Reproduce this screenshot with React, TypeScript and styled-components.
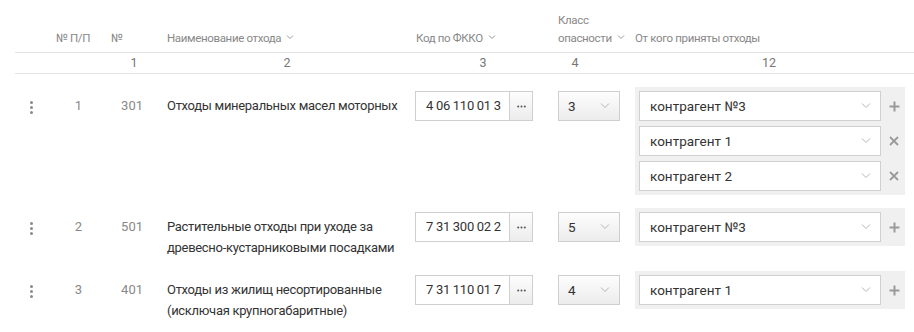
import React from "react";
import styled, { createGlobalStyle } from "styled-components";

const GlobalStyle = createGlobalStyle`
  body {
    margin: 0;
    background: #fff;
    font-family: Roboto, "Liberation Sans", sans-serif;
  }
  * {
    box-sizing: border-box;
  }
`;

const COLS = "30px 55px 56px 248px 143px 77px 1fr";

interface Contractor {
  name: string;
}

interface WasteRow {
  pos: number;
  num: number;
  name: string[];
  code: string;
  hazard: number;
  contractors: Contractor[];
}

const rows: WasteRow[] = [
  {
    pos: 1,
    num: 301,
    name: ["Отходы минеральных масел моторных"],
    code: "4 06 110 01 3",
    hazard: 3,
    contractors: [
      { name: "контрагент №3" },
      { name: "контрагент 1" },
      { name: "контрагент 2" },
    ],
  },
  {
    pos: 2,
    num: 501,
    name: ["Растительные отходы при уходе за", "древесно-кустарниковыми посадками"],
    code: "7 31 300 02 2",
    hazard: 5,
    contractors: [{ name: "контрагент №3" }],
  },
  {
    pos: 3,
    num: 401,
    name: ["Отходы из жилищ несортированные", "(исключая крупногабаритные)"],
    code: "7 31 110 01 7",
    hazard: 4,
    contractors: [{ name: "контрагент 1" }],
  },
];

function Chevron({ size = 8 }: { size?: number }) {
  const h = size / 2 + 1;
  return (
    <svg width={size + 2} height={h + 1} viewBox={`-1 -0.5 ${size + 2} ${h + 1}`}>
      <polyline
        points={`0,0 ${size / 2},${size / 2} ${size},0`}
        fill="none"
        stroke="currentColor"
        strokeWidth="1"
      />
    </svg>
  );
}

function PlusIcon() {
  return (
    <svg width="11" height="11" viewBox="0 0 11 11">
      <path d="M5.5 0.5v10M0.5 5.5h10" stroke="currentColor" strokeWidth="2" />
    </svg>
  );
}

function CloseIcon() {
  return (
    <svg width="10" height="10" viewBox="0 0 10 10">
      <path d="M1 1l8 8M9 1l-8 8" stroke="currentColor" strokeWidth="1.8" />
    </svg>
  );
}

function HeadLabel({ children, sortable }: { children: React.ReactNode; sortable?: boolean }) {
  return (
    <>
      {children}
      {sortable && (
        <SortMark>
          <Chevron size={6} />
        </SortMark>
      )}
    </>
  );
}

export default function App() {
  return (
    <>
      <GlobalStyle />
      <Table>
        <HeaderRow>
          <HeadCell $pl={0} />
          <HeadCell $pl={11}>№ П/П</HeadCell>
          <HeadCell $pl={11}>№</HeadCell>
          <HeadCell $pl={11}>
            <HeadLabel sortable>Наименование отхода</HeadLabel>
          </HeadCell>
          <HeadCell $pl={12}>
            <HeadLabel sortable>Код по ФККО</HeadLabel>
          </HeadCell>
          <HeadCell $pl={11}>
            Класс
            <br />
            <HeadLabel sortable>опасности</HeadLabel>
          </HeadCell>
          <HeadCell $pl={11}>От кого приняты отходы</HeadCell>
        </HeaderRow>

        <NumRow>
          <NumCell />
          <NumCell />
          <NumCell $pl={12}>1</NumCell>
          <NumCell $pl={14}>2</NumCell>
          <NumCell $pl={15}>3</NumCell>
          <NumCell $pr={21}>4</NumCell>
          <NumCell>12</NumCell>
        </NumRow>

        {rows.map((row) => (
          <DataRow key={row.pos}>
            <MenuCell>
              <Kebab>
                <Dot />
                <Dot />
                <Dot />
              </Kebab>
            </MenuCell>
            <IndexCell $pr={18}>{row.pos}</IndexCell>
            <IndexCell $pr={13}>{row.num}</IndexCell>
            <NameCell>
              {row.name.map((line, i) => (
                <div key={i}>{line}</div>
              ))}
            </NameCell>
            <ControlCell>
              <CodeGroup>
                <CodeInput>{row.code}</CodeInput>
                <PickButton>
                  <svg width="9" height="3" viewBox="0 0 9 3">
                    <circle cx="1.2" cy="1.5" r="1" fill="#555" />
                    <circle cx="4.5" cy="1.5" r="1" fill="#555" />
                    <circle cx="7.8" cy="1.5" r="1" fill="#555" />
                  </svg>
                </PickButton>
              </CodeGroup>
            </ControlCell>
            <ControlCell>
              <HazardSelect>
                <span>{row.hazard}</span>
                <ArrowBox>
                  <Chevron />
                </ArrowBox>
              </HazardSelect>
            </ControlCell>
            <ContractorCell>
              <ContractorPanel>
                {row.contractors.map((c, i) => (
                  <ContractorLine key={i}>
                    <ContractorSelect>
                      <span>{c.name}</span>
                      <ArrowBox>
                        <Chevron />
                      </ArrowBox>
                    </ContractorSelect>
                    <RowAction>{i === 0 ? <PlusIcon /> : <CloseIcon />}</RowAction>
                  </ContractorLine>
                ))}
              </ContractorPanel>
            </ContractorCell>
          </DataRow>
        ))}
      </Table>
    </>
  );
}

const Table = styled.div`
  width: 914px;
  padding-left: 15px;
  color: #333;
`;

const HeaderRow = styled.div`
  display: grid;
  grid-template-columns: ${COLS};
  height: 53px;
  align-items: end;
  border-bottom: 1px solid #e3e3e3;
`;

const HeadCell = styled.div<{ $pl: number }>`
  padding: 0 0 6px ${(p) => p.$pl}px;
  font-size: 11.5px;
  letter-spacing: -0.35px;
  line-height: 16px;
  color: #888;
  white-space: nowrap;
`;

const SortMark = styled.span`
  display: inline-block;
  margin-left: 5px;
  color: #999;
  vertical-align: 2px;
`;

const NumRow = styled.div`
  display: grid;
  grid-template-columns: ${COLS};
  height: 21px;
  border-bottom: 1px solid #e3e3e3;
`;

const NumCell = styled.div<{ $pl?: number; $pr?: number }>`
  padding: 0 ${(p) => p.$pr ?? 0}px 0 ${(p) => p.$pl ?? 0}px;
  text-align: center;
  font-size: 12.5px;
  line-height: 20px;
  color: #777;
`;

const DataRow = styled.div`
  display: grid;
  grid-template-columns: ${COLS};
  align-items: start;
  padding-top: 13px;
`;

const MenuCell = styled.div`
  display: flex;
  justify-content: center;
  padding: 14px 0 0 2px;
`;

const Kebab = styled.div`
  display: flex;
  flex-direction: column;
  gap: 2px;
`;

const Dot = styled.span`
  width: 3px;
  height: 3px;
  border-radius: 50%;
  background: #8a8a8a;
`;

const IndexCell = styled.div<{ $pr: number }>`
  padding: 8px ${(p) => p.$pr}px 0 0;
  text-align: right;
  font-size: 13px;
  line-height: 21px;
  color: #888;
`;

const NameCell = styled.div`
  padding: 8px 8px 0 11px;
  font-size: 13px;
  letter-spacing: -0.3px;
  line-height: 21px;
  color: #333;
  white-space: nowrap;
`;

const ControlCell = styled.div`
  padding: 4px 0 0 11px;
`;

const CodeGroup = styled.div`
  display: flex;
  height: 30px;
`;

const CodeInput = styled.div`
  width: 94px;
  height: 30px;
  padding-left: 10px;
  border: 1px solid #cfcfcf;
  border-right: none;
  background: #fff;
  font-size: 13px;
  letter-spacing: -0.3px;
  line-height: 28px;
  color: #333;
  white-space: nowrap;
  overflow: hidden;
`;

const PickButton = styled.div`
  width: 24px;
  height: 30px;
  border: 1px solid #cfcfcf;
  background: linear-gradient(#fdfdfd, #ececec);
  display: flex;
  align-items: center;
  justify-content: center;
`;

const HazardSelect = styled.div`
  width: 62px;
  height: 30px;
  display: flex;
  align-items: center;
  justify-content: space-between;
  padding: 0 9px 0 9px;
  border: 1px solid #cfcfcf;
  background: linear-gradient(#fdfdfd, #ececec);
  font-size: 13.5px;
  color: #333;
`;

const ArrowBox = styled.span`
  display: flex;
  color: #b5b5b5;
`;

const ContractorCell = styled.div`
  padding: 0 9px 0 11px;
`;

const ContractorPanel = styled.div`
  display: flex;
  flex-direction: column;
  gap: 5px;
  padding: 4px 0 4px 4px;
  background: #f0f0f0;
`;

const ContractorLine = styled.div`
  display: flex;
  align-items: center;
`;

const ContractorSelect = styled.div`
  flex: 1;
  height: 30px;
  display: flex;
  align-items: center;
  justify-content: space-between;
  padding: 0 9px 0 10px;
  border: 1px solid #d0d0d0;
  background: #fff;
  font-size: 13.5px;
  color: #333;
`;

const RowAction = styled.div`
  width: 24px;
  display: flex;
  justify-content: center;
  padding-left: 2px;
  color: #9a9a9a;
`;
